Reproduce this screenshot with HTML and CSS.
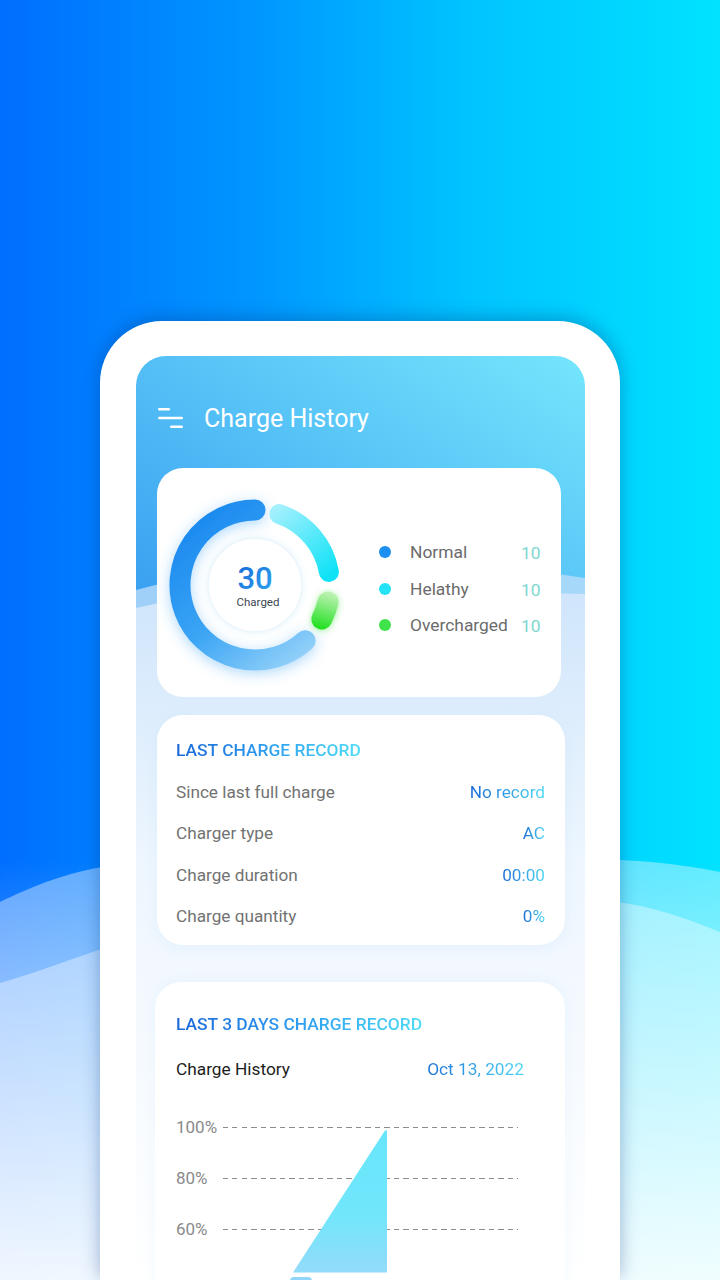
FILE: index.html
```html
<!DOCTYPE html>
<html>
<head>
<meta charset="utf-8">
<link rel="stylesheet" href="styles.css">
</head>
<body>
<div class="page">
  <svg class="page-waves" width="720" height="420" viewBox="0 0 720 420">
    <defs>
      <linearGradient id="fadeW" x1="0" y1="0" x2="0" y2="1">
        <stop offset="0" stop-color="#ffffff" stop-opacity="0"/>
        <stop offset="0.35" stop-color="#ffffff" stop-opacity="0.3"/>
        <stop offset="1" stop-color="#ffffff" stop-opacity="0.85"/>
      </linearGradient>
    </defs>
    <path d="M0 42 C 30 28, 70 8, 140 2 L 580 0 C 640 -2, 690 6, 720 12 L720 420 L0 420 Z" fill="#ffffff" fill-opacity="0.38"/>
    <path d="M0 123 C 40 112, 80 95, 130 80 L 600 40 C 650 44, 690 60, 720 72 L720 420 L0 420 Z" fill="#ffffff" fill-opacity="0.38"/>
    <rect x="0" y="0" width="720" height="420" fill="url(#fadeW)"/>
  </svg>
  <div class="phone">
    <div class="screen">
      <svg class="screen-bg" width="449" height="924" viewBox="0 0 449 924">
        <defs>
          <linearGradient id="hdr" x1="0" y1="1" x2="1" y2="0">
            <stop offset="0" stop-color="#3398f0"/>
            <stop offset="1" stop-color="#74e6fc"/>
          </linearGradient>
          <linearGradient id="sw" x1="0" y1="0" x2="0" y2="1">
            <stop offset="0" stop-color="#cfe5fb"/>
            <stop offset="0.4" stop-color="#eef6fe"/>
            <stop offset="1" stop-color="#ffffff"/>
          </linearGradient>
        </defs>
        <rect x="0" y="0" width="449" height="300" fill="url(#hdr)"/>
        <path d="M0 234 C 120 200, 300 200, 449 222 L449 924 L0 924 Z" fill="#b9dcfa" fill-opacity="0.8"/>
        <path d="M0 252 C 150 215, 320 235, 449 238 L449 924 L0 924 Z" fill="url(#sw)"/>
      </svg>
      <div class="content">
        <div class="header">
          <svg class="menu-icon" width="26" height="22" viewBox="0 0 26 22">
            <rect x="0" y="1" width="12" height="2.4" rx="1.2" fill="#fff"/>
            <rect x="0" y="9.8" width="25" height="2.4" rx="1.2" fill="#fff"/>
            <rect x="12" y="18.6" width="13" height="2.4" rx="1.2" fill="#fff"/>
          </svg>
          <span class="title">Charge History</span>
        </div>

        <div class="card card-summary">
          <svg class="donut" width="200" height="229" viewBox="0 0 200 229">
            <defs>
              <linearGradient id="gBlue" gradientUnits="userSpaceOnUse" x1="30" y1="40" x2="150" y2="190">
                <stop offset="0" stop-color="#1786ef"/>
                <stop offset="0.55" stop-color="#3aa4f4"/>
                <stop offset="1" stop-color="#95d2f9"/>
              </linearGradient>
              <linearGradient id="gCyan" gradientUnits="userSpaceOnUse" x1="120" y1="40" x2="175" y2="105">
                <stop offset="0" stop-color="#a4f0fd"/>
                <stop offset="1" stop-color="#0fe2f6"/>
              </linearGradient>
              <linearGradient id="gGreen" gradientUnits="userSpaceOnUse" x1="170" y1="124" x2="160" y2="160">
                <stop offset="0" stop-color="#bff2b4"/>
                <stop offset="1" stop-color="#1fe01f"/>
              </linearGradient>
              <linearGradient id="gNum" x1="0" y1="0" x2="1" y2="1">
                <stop offset="0" stop-color="#1466d6"/>
                <stop offset="1" stop-color="#32a8f2"/>
              </linearGradient>
              <filter id="glow" filterUnits="userSpaceOnUse" x="0" y="0" width="200" height="229">
                <feDropShadow dx="0" dy="3" stdDeviation="7" flood-color="#3aa2f2" flood-opacity="0.42"/>
              </filter>
              <filter id="glowG" filterUnits="userSpaceOnUse" x="130" y="100" width="70" height="80">
                <feDropShadow dx="0" dy="1" stdDeviation="3" flood-color="#30e030" flood-opacity="0.5"/>
              </filter>
              <filter id="inner" filterUnits="userSpaceOnUse" x="30" y="50" width="140" height="140">
                <feDropShadow dx="0" dy="0" stdDeviation="3" flood-color="#9fd8f5" flood-opacity="0.25"/>
              </filter>
            </defs>
            <circle cx="98" cy="117" r="47" fill="#fff" stroke="#eef7fb" stroke-width="2" filter="url(#inner)"/>
            <path d="M148.2 172.7 A75 75 0 1 1 98 42" fill="none" stroke="url(#gBlue)" stroke-width="21" stroke-linecap="round" filter="url(#glow)"/>
            <path d="M122.4 46.1 A75 75 0 0 1 171.9 104" fill="none" stroke="url(#gCyan)" stroke-width="20" stroke-linecap="round"/>
            <path d="M171.1 133.9 A75 75 0 0 1 164.8 151" fill="none" stroke="url(#gGreen)" stroke-width="21" stroke-linecap="round" filter="url(#glowG)"/>
            <text x="98" y="121" text-anchor="middle" class="donut-num" fill="url(#gNum)">30</text>
            <text x="101" y="138" text-anchor="middle" class="donut-lbl">Charged</text>
          </svg>
          <div class="legend">
            <div class="legend-row"><span class="dot dot-normal"></span><span class="legend-label">Normal</span><span class="legend-val">10</span></div>
            <div class="legend-row"><span class="dot dot-healthy"></span><span class="legend-label">Helathy</span><span class="legend-val">10</span></div>
            <div class="legend-row"><span class="dot dot-over"></span><span class="legend-label">Overcharged</span><span class="legend-val">10</span></div>
          </div>
        </div>

        <div class="card card-record">
          <div class="section-title">LAST CHARGE RECORD</div>
          <div class="rows">
            <div class="row"><span class="row-label">Since last full charge</span><span class="row-val">No record</span></div>
            <div class="row"><span class="row-label">Charger type</span><span class="row-val">AC</span></div>
            <div class="row"><span class="row-label">Charge duration</span><span class="row-val">00:00</span></div>
            <div class="row"><span class="row-label">Charge quantity</span><span class="row-val">0%</span></div>
          </div>
        </div>

        <div class="card card-history">
          <div class="section-title">LAST 3 DAYS CHARGE RECORD</div>
          <div class="hist-head">
            <span class="hist-title">Charge History</span>
            <span class="hist-date">Oct 13, 2022</span>
          </div>
          <div class="chart">
            <div class="chart-row"><span class="axis-label">100%</span><span class="grid-line"></span></div>
            <div class="chart-row"><span class="axis-label">80%</span><span class="grid-line"></span></div>
            <div class="chart-row"><span class="axis-label">60%</span><span class="grid-line"></span></div>
            <svg class="chart-area" width="300" height="190" viewBox="0 0 300 190">
              <defs>
                <linearGradient id="gArea" x1="0" y1="0" x2="0" y2="1">
                  <stop offset="0" stop-color="#66e6fb"/>
                  <stop offset="0.6" stop-color="#72e6fb"/>
                  <stop offset="1" stop-color="#93dbfa"/>
                </linearGradient>
              </defs>
              <polygon points="117,170.5 209,28.5 211,28.5 211,170.5" fill="url(#gArea)"/>
              <rect x="114" y="175" width="22" height="10" rx="4" fill="#8fd6fa"/>
            </svg>
          </div>
        </div>
      </div>
    </div>
  </div>
</div>
</body>
</html>
```

FILE: styles.css
```css
* { box-sizing: border-box; }
html, body { margin: 0; padding: 0; }
body {
  width: 720px;
  height: 1280px;
  overflow: hidden;
  font-family: Roboto, "Liberation Sans", Arial, sans-serif;
}
.page {
  position: relative;
  width: 720px;
  height: 1280px;
  overflow: hidden;
  background: linear-gradient(90deg, #006eff 0%, #0096ff 35%, #00c4ff 65%, #00e2ff 100%);
  padding-top: 321px;
}
.page-waves {
  position: absolute;
  left: 0;
  top: 860px;
  display: block;
}
.phone {
  position: relative;
  width: 520px;
  height: 959px;
  margin-left: 100px;
  background: #fff;
  border-radius: 62px 62px 0 0;
  padding: 35px 35px 0 36px;
  box-shadow: 0 -3px 18px rgba(0, 50, 120, 0.35);
}
.screen {
  position: relative;
  width: 449px;
  height: 924px;
  border-radius: 30px 30px 0 0;
  overflow: hidden;
}
.screen-bg {
  position: absolute;
  left: 0;
  top: 0;
  display: block;
}
.content {
  position: relative;
}
.header {
  height: 112px;
  padding: 12px 0 0 22px;
  display: flex;
  align-items: center;
  gap: 20px;
}
.menu-icon { display: block; }
.title {
  color: #fff;
  font-size: 25px;
  font-weight: 400;
}
.card {
  background: #fff;
  border-radius: 26px;
}
.card-summary {
  margin: 0 24px 0 21px;
  height: 229px;
  display: flex;
  align-items: flex-start;
}
.donut { display: block; flex: none; }
.donut-num {
  font-family: Roboto, "Liberation Sans", sans-serif;
  font-size: 31px;
  font-weight: 500;
}
.donut-lbl {
  font-family: Roboto, "Liberation Sans", sans-serif;
  font-size: 11.5px;
  fill: #3c4650;
}
.legend {
  margin-left: 22px;
  padding-top: 66px;
  display: flex;
  flex-direction: column;
}
.legend-row {
  height: 36.5px;
  display: flex;
  align-items: center;
}
.dot {
  width: 12px;
  height: 12px;
  border-radius: 50%;
  flex: none;
}
.dot-normal { background: #1c8ff0; }
.dot-healthy { background: #22e2f3; }
.dot-over { background: #3fe24b; }
.legend-label {
  margin-left: 19px;
  width: 111px;
  font-size: 17.4px;
  color: #6b6b6b;
}
.legend-val {
  font-size: 17.4px;
  color: #7ed6cf;
  padding-top: 2px;
}
.card-record {
  margin: 18px 20px 0 21px;
  height: 230px;
  padding: 23px 20px 0 19px;
  box-shadow: 0 4px 14px rgba(170, 215, 245, 0.18);
}
.section-title {
  font-size: 17.4px;
  line-height: 24px;
  font-weight: 500;
  background: linear-gradient(90deg, #1a66d6 0%, #2e9ef0 50%, #4fdcf6 100%);
  -webkit-background-clip: text;
  background-clip: text;
  color: transparent;
  display: inline-block;
}
.rows {
  margin-top: 9.5px;
}
.row {
  height: 41.3px;
  display: flex;
  align-items: center;
  justify-content: space-between;
}
.row-label {
  font-size: 17.2px;
  color: #727272;
}
.row-val {
  font-size: 17.2px;
  background: linear-gradient(90deg, #1a6ad8 0%, #4fd8f5 100%);
  -webkit-background-clip: text;
  background-clip: text;
  color: transparent;
}
.card-history {
  margin: 37px 20px 0 19px;
  height: 320px;
  padding: 30px 41px 0 21px;
  box-shadow: 0 -2px 14px rgba(170, 215, 245, 0.15);
}
.hist-head {
  margin-top: 21px;
  height: 24px;
  display: flex;
  align-items: center;
  justify-content: space-between;
}
.hist-title {
  font-size: 17.3px;
  color: #1e1e1e;
}
.hist-date {
  font-size: 17.3px;
  background: linear-gradient(90deg, #1d72da 0%, #4fd6f5 100%);
  -webkit-background-clip: text;
  background-clip: text;
  color: transparent;
}
.chart {
  position: relative;
  margin-top: 20.5px;
  height: 190px;
}
.chart-row {
  height: 51px;
  display: flex;
  align-items: center;
}
.axis-label {
  width: 47px;
  font-size: 17px;
  color: #8a8a8a;
}
.grid-line {
  width: 295px;
  height: 1px;
  background: repeating-linear-gradient(90deg, #8c8c8c 0 5px, transparent 5px 9.5px);
}
.chart-area {
  position: absolute;
  left: 0;
  top: 0;
  display: block;
}
```
